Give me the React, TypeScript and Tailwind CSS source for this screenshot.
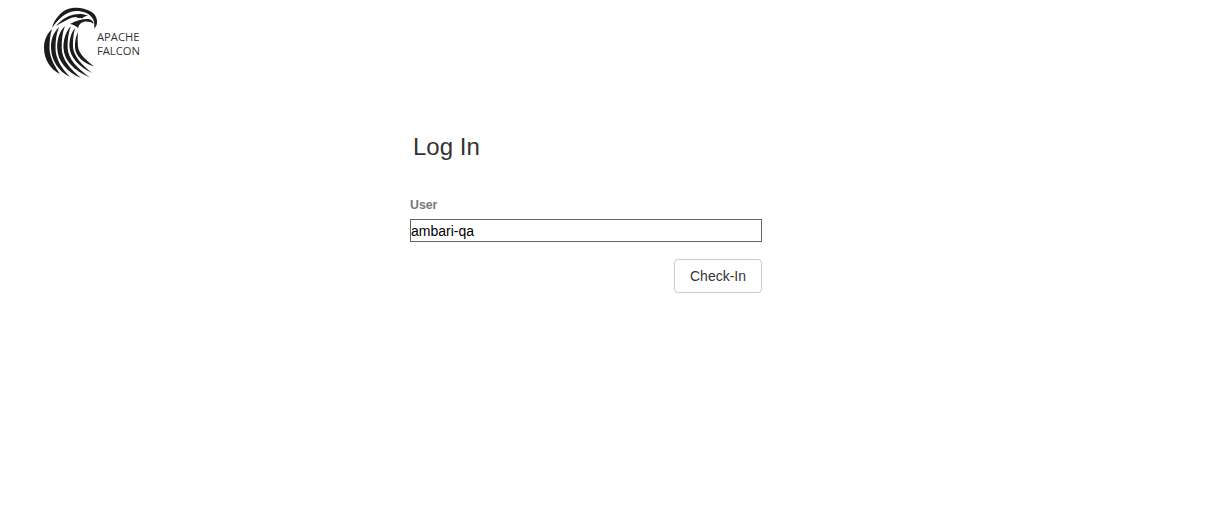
import React from "react";

function FalconLogo() {
  return (
    <svg width="56" height="72" viewBox="43 7 56 72" className="block shrink-0" fill="#1c1c1c">
      {/* head outline and beak */}
      <path d="M52 28C54 20 60 12 68 9C75 6.500 84 7.500 91 11.500C95 14 97.500 18 97 23C96.800 25.500 95.500 27.500 94 28.500C94.800 25 94.500 21 92 17.500C88 12.500 81 10.500 74 11.200C66 12 58 19 52 28Z" />
      {/* brow and eye */}
      <path d="M56 26C61 20 67 16 74 14.500C79 13.500 84 13.800 88 15.500C85 16 83.500 17 82 18.500C79 16.500 75 16.500 71 18C66 20 61 23 56 26Z" />
      <path d="M76 17C78 15.800 80.500 15.800 82 17C80 18.200 78 18.200 76 17Z" />
      {/* cheek below the eye */}
      <path d="M70 24C76 20.500 82 19 87 19C90.500 19 93.500 20.500 93.500 24C91 21.800 87.500 21.300 84 21.800C81 22.300 79 24.500 78 28C76 26 73 24.500 70 24Z" />
      {/* neck feathers, outer to inner */}
      <path d="M52 29C46 35 44 41 44 48C44 59 50 69 60 74C54.500 66 49.500 57 49.500 48C49.500 41 50 35 52 29Z" />
      <path d="M59 27C53 33 50.800 40 51 48C51.300 60 58 71 70 77C61 68 55.500 58 55.500 48C55.500 40 56.500 33 59 27Z" />
      <path d="M65 26C59 32 57 40 57.200 48C57.500 60 66 72 81 78C70 69 61.800 59 61.700 48C61.600 40 62.500 32 65 26Z" />
      <path d="M71 26C65.500 32 63.300 40 63.500 48C63.800 60 74 71 90 77.500C78 69 68 59 67.600 48C67.400 40 68.500 32 71 26Z" />
      <path d="M75 28C71 33 69.200 40 69.500 47C70 57 79 67 92 73C82 65 73.500 56 73 47C72.700 40 73.500 34 75 28Z" />
      <path d="M78 32C75.500 37 74.700 43 75 48C75.800 56 83 63 94 66.500C86 60 79 54 78 47C77.500 42 77.500 37 78 32Z" />
    </svg>
  );
}

export default function App() {
  return (
    <div className="min-h-[517px] bg-white font-['Liberation_Sans',Arial,sans-serif] text-[#333333]">
      <header className="flex items-start pl-[43px] pt-[7px]">
        <FalconLogo />
        <div className="ml-[-2px] mt-[23px] font-['Open_Sans',sans-serif] text-[11.2px] leading-[14px] text-[#333333]">
          <div>APACHE</div>
          <div>FALCON</div>
        </div>
      </header>

      <main className="ml-[410px] mt-[50px] w-[352px]">
        <h1 className="pl-[3px] text-[24px] font-normal leading-[36px] text-[#333333]">Log In</h1>
        <form className="mt-[31px]">
          <label className="block text-[12.3px] font-bold leading-[18px] text-[#777777]">User</label>
          <input
            readOnly
            value="ambari-qa"
            className="mt-[5px] block h-[23px] w-full border border-[#666666] bg-white text-[14px] text-black outline-none"
          />
          <div className="mt-[17px] flex justify-end">
            <button
              type="button"
              className="h-[34px] w-[88px] rounded-[4px] border border-[#cccccc] bg-white text-[14px] text-[#333333]"
            >
              Check-In
            </button>
          </div>
        </form>
      </main>
    </div>
  );
}
